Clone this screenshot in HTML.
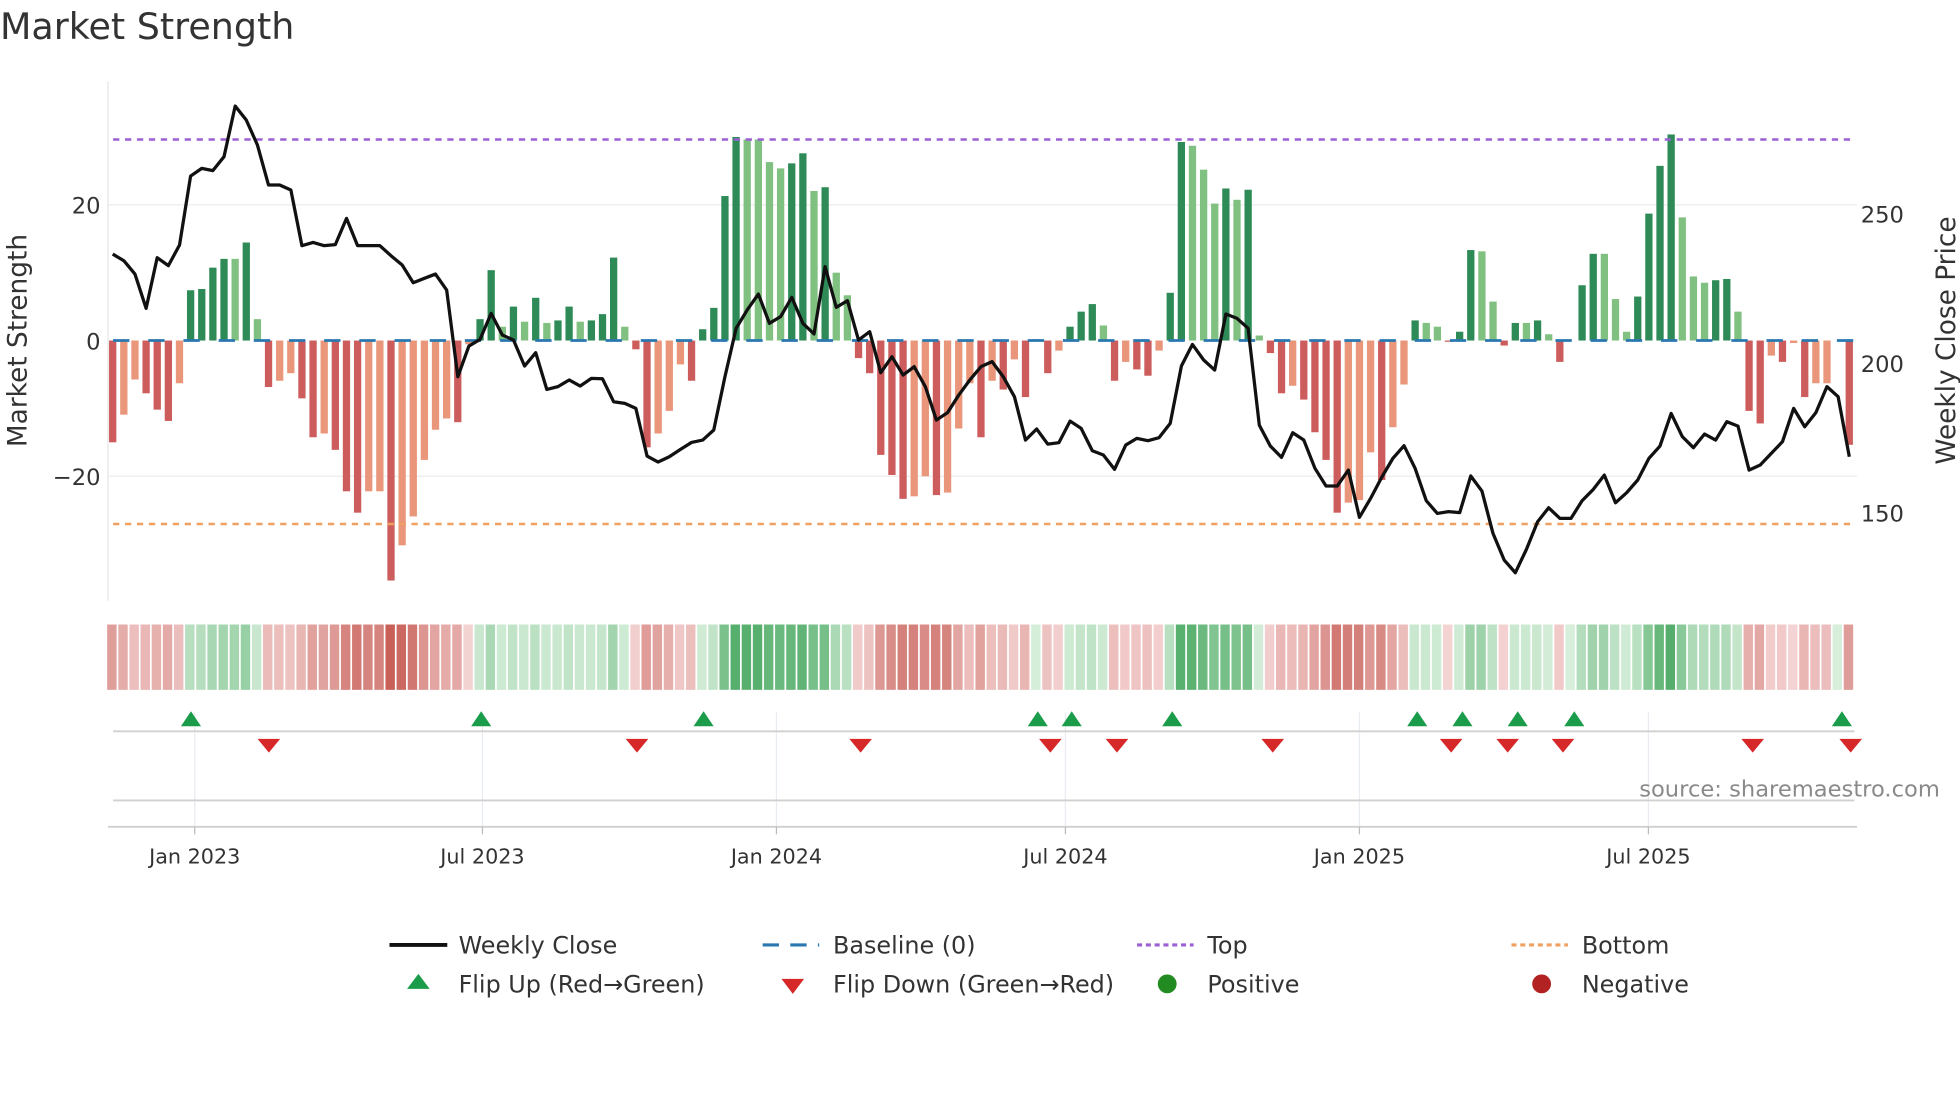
<!DOCTYPE html>
<html><head><meta charset="utf-8"><style>
html,body{margin:0;padding:0;background:#fff;width:1960px;height:1102px;overflow:hidden}
svg{display:block}
text{font-family:"DejaVu Sans","Liberation Sans",sans-serif;fill:#333}
</style></head><body>
<svg id="s" width="1960" height="1102" viewBox="0 0 1560 877" preserveAspectRatio="none" xmlns="http://www.w3.org/2000/svg">
<text x="0" y="31" font-size="29">Market Strength</text>
<line x1="86" y1="65" x2="86" y2="478" stroke="#e6e6e6" stroke-width="1"/>
<g stroke="#ececec" stroke-width="1">
<line x1="86" y1="163" x2="1478" y2="163"/>
<line x1="86" y1="379" x2="1478" y2="379"/>
</g>
<g id="bars"></g>
<line x1="90" y1="111" x2="1476" y2="111" stroke="#9b5fd6" stroke-width="2" stroke-dasharray="5 4.5"/>
<line x1="90" y1="417" x2="1476" y2="417" stroke="#f0a060" stroke-width="2" stroke-dasharray="5 4.5"/>
<g id="base"></g>
<polyline id="ln" fill="none" stroke="#111" stroke-width="2.6" stroke-linejoin="round"/>
<text x="80" y="278" font-size="18" text-anchor="end">0</text>
<text x="80" y="170" font-size="18" text-anchor="end">20</text>
<text x="80" y="386" font-size="18" text-anchor="end">−20</text>
<text x="1481" y="177" font-size="18">250</text>
<text x="1481" y="296" font-size="18">200</text>
<text x="1481" y="415" font-size="18">150</text>
<text transform="translate(21,271) rotate(-90)" font-size="21" text-anchor="middle">Market Strength</text>
<text transform="translate(1556,271) rotate(-90)" font-size="21" text-anchor="middle">Weekly Close Price</text>
<g id="strip"></g>
<g stroke="#e8ecf2" stroke-width="1">
<line x1="155" y1="567" x2="155" y2="658"/><line x1="384" y1="567" x2="384" y2="658"/>
<line x1="618" y1="567" x2="618" y2="658"/><line x1="848" y1="567" x2="848" y2="658"/>
<line x1="1082" y1="567" x2="1082" y2="658"/><line x1="1312" y1="567" x2="1312" y2="658"/>
</g>
<line x1="90" y1="582" x2="1476" y2="582" stroke="#d0d0d0" stroke-width="1.5"/>
<line x1="90" y1="637" x2="1476" y2="637" stroke="#d0d0d0" stroke-width="1.5"/>
<line x1="86" y1="658" x2="1478" y2="658" stroke="#cfcfcf" stroke-width="1.5"/>
<g stroke="#bbb" stroke-width="1">
<line x1="155" y1="658" x2="155" y2="664"/><line x1="384" y1="658" x2="384" y2="664"/>
<line x1="618" y1="658" x2="618" y2="664"/><line x1="848" y1="658" x2="848" y2="664"/>
<line x1="1082" y1="658" x2="1082" y2="664"/><line x1="1312" y1="658" x2="1312" y2="664"/>
</g>
<g id="mk"></g>
<g font-size="16.5" text-anchor="middle">
<text x="155" y="687">Jan 2023</text><text x="384" y="687">Jul 2023</text>
<text x="618" y="687">Jan 2024</text><text x="848" y="687">Jul 2024</text>
<text x="1082" y="687">Jan 2025</text><text x="1312" y="687">Jul 2025</text>
</g>
<text x="1544" y="634" font-size="18" text-anchor="end" style="fill:#8a8a8a">source: sharemaestro.com</text>
<g font-size="19">
<line x1="310" y1="752" x2="356" y2="752" stroke="#111" stroke-width="3"/>
<text x="365" y="759">Weekly Close</text>
<line x1="607" y1="752" x2="652" y2="752" stroke="#2a78b0" stroke-width="2.5" stroke-dasharray="13 9"/>
<text x="663" y="759">Baseline (0)</text>
<line x1="905" y1="752" x2="950" y2="752" stroke="#9b5fd6" stroke-width="2.5" stroke-dasharray="4 3"/>
<text x="961" y="759">Top</text>
<line x1="1203" y1="752" x2="1248" y2="752" stroke="#f0a060" stroke-width="2.5" stroke-dasharray="4 3"/>
<text x="1259" y="759">Bottom</text>
<polygon points="333,775 342,787 324,787" fill="#1a9c4a"/>
<text x="365" y="790">Flip Up (Red→Green)</text>
<polygon points="622,779 640,779 631,791" fill="#d62828"/>
<text x="663" y="790">Flip Down (Green→Red)</text>
<circle cx="929" cy="783" r="7.5" fill="#228b22"/>
<text x="961" y="790">Positive</text>
<circle cx="1227" cy="783" r="7.5" fill="#b22222"/>
<text x="1259" y="790">Negative</text>
</g>
</svg>
<script>
var h=[-81,-59,-31,-42,-55,-64,-34,40,41,58,65,65,78,17,-37,-32,-26,-46,-77,-74,-87,-120,-137,-120,-120,-191,-163,-140,-95,-71,-62,-65,-3,17,56,11,27,15,34,14,
16,27,15,16,21,66,11,-7,-85,-74,-56,-19,-32,9,26,115,162,160,160,142,137,141,149,119,122,54,36,-14,-26,-91,-107,-126,-124,-108,-123,-121,-70,-34,-77,-32,
-39,-15,-45,1,-26,-8,11,23,29,12,-32,-17,-23,-28,-8,38,158,155,136,109,121,112,120,4,-10,-42,-36,-47,-73,-95,-137,-129,-127,-89,-111,-69,-35,16,14,
11,-1,7,72,71,31,-4,14,14,16,5,-17,0,44,69,69,33,7,35,101,139,164,98,51,46,48,49,23,-56,-66,-12,-17,-2,-45,-34,-34,0,-83];
var L=[492,512,552,655,503,527,465,258,235,242,200,48,90,165,285,285,300,467,457,467,464,385,467,467,467,497,525,578,565,552,600,860,768,748,670,735,750,828,788,898,
890,870,888,865,866,935,940,955,1098,1116,1100,1078,1057,1050,1020,860,715,660,612,700,680,622,700,732,530,652,632,750,725,848,800,855,830,890,990,968,915,870,830,815,
860,920,1050,1017,1062,1058,993,1015,1082,1095,1138,1065,1045,1052,1043,1000,828,763,810,840,672,685,715,1005,1068,1102,1028,1050,1135,1188,1188,1140,1282,1225,1162,1105,1067,1135,1232,1270,
1265,1268,1158,1203,1330,1410,1448,1378,1295,1253,1285,1285,1232,1198,1155,1238,1208,1170,1105,1068,970,1040,1073,1032,1050,995,1008,1140,1125,1090,1055,955,1010,968,890,920,1100];
var NS="http://www.w3.org/2000/svg";
function el(p,t,a){var e=document.createElementNS(NS,t);for(var k in a)e.setAttribute(k,a[k]);p.appendChild(e);return e;}
var bars=document.getElementById('bars'),strip=document.getElementById('strip'),base=document.getElementById('base');
var P=8.86,X0=89.7,Z=271;
function mix(a,b,t){return 'rgb('+[0,1,2].map(function(i){return Math.round(a[i]+(b[i]-a[i])*t)}).join(',')+')';}
var pts=[];
for(var i=0;i<h.length;i++){
 var x=X0+i*P,v=h[i],p=i?h[i-1]:0;
 var dark=(Math.abs(v)>Math.abs(p))||(v*p<0);
 var c=v>=0?(dark?'#2e8b57':'#80c080'):(dark?'#cd5c5c':'#e9967a');
 if(v!==0)el(bars,'rect',{x:x-2.9,y:v>0?Z-v:Z,width:5.8,height:Math.abs(v),fill:c});
 var t=Math.min(Math.abs(v)/175,1);
 var sc=v>=0?mix([214,238,218],[76,170,100],t):mix([244,212,212],[200,96,88],t);
 el(strip,'rect',{x:x-4.4,y:497,width:7.5,height:52,fill:sc});
 pts.push(x.toFixed(1)+','+(71.63+L[i]*0.2653).toFixed(1));
}
document.getElementById('ln').setAttribute('points',pts.join(' '));
el(base,'line',{x1:90,y1:271,x2:1476,y2:271,stroke:'#2a78b0','stroke-width':2.2,'stroke-dasharray':'13 15'});
var mk=document.getElementById('mk');
[152,383,560,826,853,933,1128,1164,1208,1253,1466].forEach(function(x){el(mk,'polygon',{points:(x)+',566 '+(x+8)+',578 '+(x-8)+',578',fill:'#1a9c4a'});});
[214,507,685,836,889,1013,1155,1200,1244,1395,1473].forEach(function(x){el(mk,'polygon',{points:(x-9)+',588 '+(x+9)+',588 '+x+',599',fill:'#d62828'});});
</script>
</body></html>
